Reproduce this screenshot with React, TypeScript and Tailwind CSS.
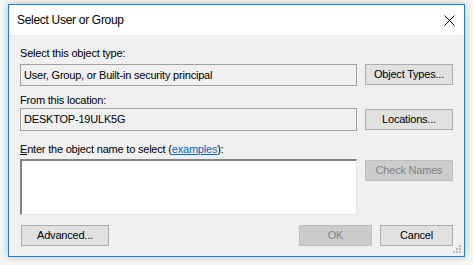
import React from 'react';

const ui = { fontFamily: '"Liberation Sans", Arial, sans-serif', letterSpacing: '-0.2px' };

const Btn: React.FC<{ label: React.ReactNode; w: string; disabled?: boolean }> = ({ label, w, disabled }) => (
  <button
    className={
      disabled
        ? `${w} h-[21px] border border-[#bfbfbf] bg-[#cccccc] text-[#838383] text-[11px] leading-none`
        : `${w} h-[21px] border border-[#adadad] bg-[#e1e1e1] text-black text-[11px] leading-none`
    }
    style={ui}
  >
    {label}
  </button>
);

const App: React.FC = () => {
  return (
    <div className="w-[473px] h-[265px] bg-[#f7f7f7] pt-[4px] pl-[8px] overflow-hidden">
      {/* Dialog window */}
      <div className="w-[457px] h-[253px] border border-[#1883d7] bg-[#f0f0f0] shadow-[0_0_8px_rgba(0,0,0,0.25)] flex flex-col">
        {/* Title bar */}
        <div className="h-[30px] bg-white flex items-center justify-between pl-[8px] pr-[9px] shrink-0">
          <span
            className="text-[12px] text-black"
            style={{ fontFamily: '"Liberation Sans", Arial, sans-serif', letterSpacing: '-0.3px' }}
          >
            Select User or Group
          </span>
          <svg width="11" height="11" viewBox="0 0 11 11">
            <path d="M0.5 0.5 L10.5 10.5 M10.5 0.5 L0.5 10.5" stroke="#000" strokeWidth="1" />
          </svg>
        </div>

        {/* Body */}
        <div className="flex-1 flex flex-col pl-[11px] pr-[11px] text-[11px] text-black" style={ui}>
          <div className="mt-[11px] h-[14px] leading-[14px]">Select this object type:</div>
          <div className="mt-[4px] flex gap-[8px] items-start">
            <div className="w-[337px] h-[22px] border border-[#a0a0a0] bg-[#f0f0f0] flex items-center pl-[3px]">
              User, Group, or Built-in security principal
            </div>
            <Btn label="Object Types..." w="w-[88px]" />
          </div>

          <div className="mt-[7px] h-[14px] leading-[14px]">From this location:</div>
          <div className="mt-[1px] flex gap-[8px] items-start">
            <div className="w-[337px] h-[23px] border border-[#a0a0a0] bg-[#f0f0f0] flex items-center pl-[3px]">
              DESKTOP-19ULK5G
            </div>
            <Btn label="Locations..." w="w-[88px] mt-[1px]" />
          </div>

          <div className="mt-[11px] h-[14px] leading-[14px]">
            <span className="underline">E</span>nter the object name to select (
            <span className="text-[#0066cc] underline">examples</span>):
          </div>
          <div className="mt-[3px] flex gap-[8px] items-start">
            <div className="w-[337px] h-[56px] bg-white border-t-2 border-l-2 border-[#838383] border-r border-b border-r-[#e3e3e3] border-b-[#e3e3e3]" />
            <Btn label="Check Names" w="w-[88px] mt-[1px]" disabled />
          </div>

          <div className="mt-[10px] flex items-start">
            <div className="pl-[1px]">
              <Btn label="Advanced..." w="w-[88px]" />
            </div>
            <div className="flex-1" />
            <div className="flex gap-[8px]">
              <Btn label="OK" w="w-[73px]" disabled />
              <Btn label="Cancel" w="w-[73px]" />
            </div>
          </div>

          {/* Resize grip */}
          <div className="flex justify-end mt-[-1px] mr-[-9px]">
            <svg width="9" height="9" viewBox="0 0 9 9">
              <rect x="6" y="0" width="2" height="2" fill="#b8b8b8" />
              <rect x="3" y="3" width="2" height="2" fill="#b8b8b8" />
              <rect x="6" y="3" width="2" height="2" fill="#b8b8b8" />
              <rect x="0" y="6" width="2" height="2" fill="#b8b8b8" />
              <rect x="3" y="6" width="2" height="2" fill="#b8b8b8" />
              <rect x="6" y="6" width="2" height="2" fill="#b8b8b8" />
            </svg>
          </div>
        </div>
      </div>
    </div>
  );
};

export default App;
